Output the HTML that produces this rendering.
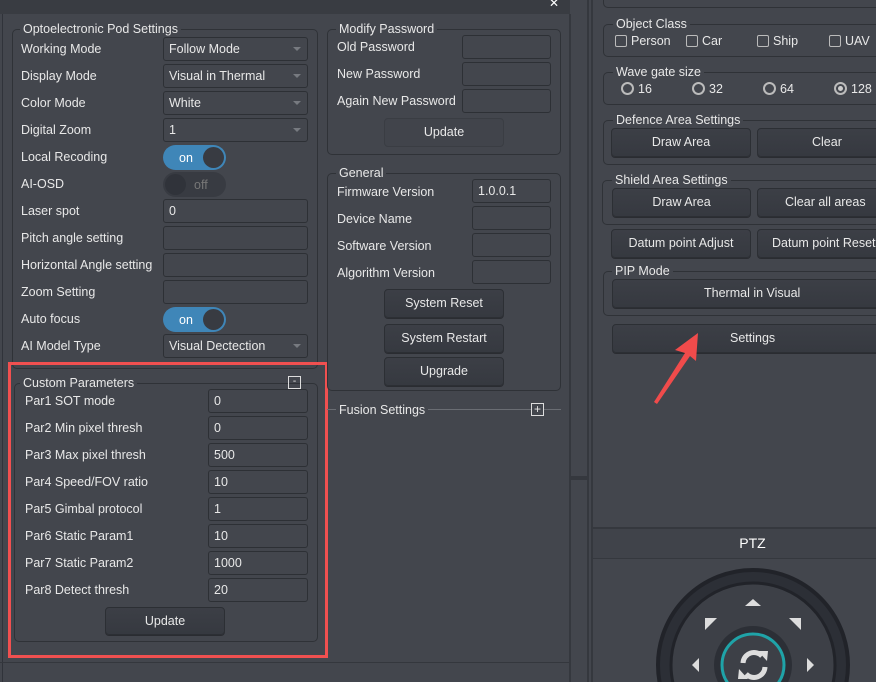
<!DOCTYPE html><html style="overflow:hidden"><head><style>
*{margin:0;padding:0;box-sizing:border-box}
html,body{width:876px;height:682px;overflow:hidden}
body{background:#43464d;position:relative;font-family:"Liberation Sans","Noto Sans CJK SC",sans-serif;font-size:12.5px;color:#e8e8e8}
.a{position:absolute}
.g{position:absolute;border:1px solid #2f3237;border-radius:5px}
.gt{position:absolute;background:#43464d;padding:0 3px;line-height:14px;white-space:nowrap}
.l{position:absolute;line-height:16px;white-space:nowrap}
.f{position:absolute;height:24px;border:1px solid #2d3035;border-radius:3px;background:#43464d;padding-left:5px;line-height:22px}
.cb:after{content:"";position:absolute;right:6px;top:9px;border:4px solid transparent;border-top:4px solid #777a80}
.b{position:absolute;border:1px solid #2c2f34;border-radius:4px;background:linear-gradient(#3c3f46,#363940);text-align:center;line-height:27px;box-shadow:0 1px 0 #2a2c31}
.tg{position:absolute;width:63px;height:25px;border-radius:13px}
.tg span{line-height:16px}
.ck{display:inline-block;width:12px;height:12px;border:1px solid #bbb;border-radius:2px;vertical-align:-2px;margin-right:4px}
.rd{display:inline-block;width:13px;height:13px;border:2px solid #bbb;border-radius:50%;vertical-align:-2px;margin-right:4px;position:relative}
</style></head><body>
<div class="a" style="left:0;top:0;width:570px;height:14px;background:#393c42"></div>
<div class="a" style="left:549px;top:-4px;font-size:12px;color:#fff">✕</div>
<div class="a" style="left:2px;top:14px;width:1px;height:668px;background:#30333a"></div>
<div class="a" style="left:569px;top:14px;width:2px;height:668px;background:#35383e"></div>
<div class="a" style="left:571px;top:0;width:17px;height:682px;background:#43464d"></div>
<div class="a" style="left:571px;top:476px;width:17px;height:4px;background:#35383e"></div>
<div class="a" style="left:587px;top:0;width:2px;height:682px;background:#35383e"></div>
<div class="a" style="left:591px;top:0;width:2px;height:682px;background:#35383e"></div>
<div class="a" style="left:0;top:662px;width:569px;height:1px;background:#34373d"></div>

<div class="g" style="left:12px;top:29px;width:306px;height:340px"></div>
<div class="gt" style="left:20px;top:22px">Optoelectronic Pod Settings</div>
<div class="l" style="left:21px;top:41px">Working Mode</div><div class="f cb" style="left:163px;top:37px;width:145px">Follow Mode</div>
<div class="l" style="left:21px;top:68px">Display Mode</div><div class="f cb" style="left:163px;top:64px;width:145px">Visual in Thermal</div>
<div class="l" style="left:21px;top:95px">Color Mode</div><div class="f cb" style="left:163px;top:91px;width:145px">White</div>
<div class="l" style="left:21px;top:122px">Digital Zoom</div><div class="f cb" style="left:163px;top:118px;width:145px">1</div>
<div class="l" style="left:21px;top:149px">Local Recoding</div>
<div class="tg" style="left:163px;top:145px;background:#3f86b8"><span class="a" style="left:16px;top:5px;color:#fff">on</span><span class="a" style="left:40px;top:2px;width:21px;height:21px;border-radius:50%;background:#383b42"></span></div>
<div class="l" style="left:21px;top:176px">AI-OSD</div>
<div class="tg" style="left:163px;top:172px;background:#383b42"><span class="a" style="left:2px;top:2px;width:21px;height:21px;border-radius:50%;background:#30333a"></span><span class="a" style="left:31px;top:5px;color:#777">off</span></div>
<div class="l" style="left:21px;top:203px">Laser spot</div><div class="f" style="left:163px;top:199px;width:145px">0</div>
<div class="l" style="left:21px;top:230px">Pitch angle setting</div><div class="f" style="left:163px;top:226px;width:145px"></div>
<div class="l" style="left:21px;top:257px">Horizontal Angle setting</div><div class="f" style="left:163px;top:253px;width:145px"></div>
<div class="l" style="left:21px;top:284px">Zoom Setting</div><div class="f" style="left:163px;top:280px;width:145px"></div>
<div class="l" style="left:21px;top:311px">Auto focus</div>
<div class="tg" style="left:163px;top:307px;background:#3f86b8"><span class="a" style="left:16px;top:5px;color:#fff">on</span><span class="a" style="left:40px;top:2px;width:21px;height:21px;border-radius:50%;background:#383b42"></span></div>
<div class="l" style="left:21px;top:338px">AI Model Type</div><div class="f cb" style="left:163px;top:334px;width:145px">Visual Dectection</div>

<div class="a" style="left:8px;top:362px;width:320px;height:296px;border:3px solid #f05050"></div>
<div class="g" style="left:14px;top:383px;width:304px;height:259px"></div>
<div class="gt" style="left:20px;top:376px">Custom Parameters</div>
<div class="a" style="left:288px;top:376px;width:13px;height:13px;border:1px solid #ddd;font-size:10px;line-height:9px;text-align:center">-</div>
<div class="l" style="left:25px;top:393px">Par1 SOT mode</div><div class="f" style="left:208px;top:389px;width:100px">0</div>
<div class="l" style="left:25px;top:420px">Par2 Min pixel thresh</div><div class="f" style="left:208px;top:416px;width:100px">0</div>
<div class="l" style="left:25px;top:447px">Par3 Max pixel thresh</div><div class="f" style="left:208px;top:443px;width:100px">500</div>
<div class="l" style="left:25px;top:474px">Par4 Speed/FOV ratio</div><div class="f" style="left:208px;top:470px;width:100px">10</div>
<div class="l" style="left:25px;top:501px">Par5 Gimbal protocol</div><div class="f" style="left:208px;top:497px;width:100px">1</div>
<div class="l" style="left:25px;top:528px">Par6 Static Param1</div><div class="f" style="left:208px;top:524px;width:100px">10</div>
<div class="l" style="left:25px;top:555px">Par7 Static Param2</div><div class="f" style="left:208px;top:551px;width:100px">1000</div>
<div class="l" style="left:25px;top:582px">Par8 Detect thresh</div><div class="f" style="left:208px;top:578px;width:100px">20</div>
<div class="b" style="left:105px;top:607px;width:120px;height:28px">Update</div>

<div class="g" style="left:327px;top:29px;width:234px;height:126px"></div>
<div class="gt" style="left:336px;top:22px">Modify Password</div>
<div class="l" style="left:337px;top:39px">Old Password</div><div class="f" style="left:462px;top:35px;width:89px"></div>
<div class="l" style="left:337px;top:66px">New Password</div><div class="f" style="left:462px;top:62px;width:89px"></div>
<div class="l" style="left:337px;top:93px">Again New Password</div><div class="f" style="left:462px;top:89px;width:89px"></div>
<div class="b" style="left:384px;top:118px;width:120px;height:29px;background:#41444b;box-shadow:none;border-color:#3a3d43">Update</div>
<div class="g" style="left:327px;top:173px;width:234px;height:218px"></div>
<div class="gt" style="left:336px;top:166px">General</div>
<div class="l" style="left:337px;top:184px">Firmware Version</div><div class="f" style="left:472px;top:179px;width:79px">1.0.0.1</div>
<div class="l" style="left:337px;top:211px">Device Name</div><div class="f" style="left:472px;top:206px;width:79px"></div>
<div class="l" style="left:337px;top:238px">Software Version</div><div class="f" style="left:472px;top:233px;width:79px"></div>
<div class="l" style="left:337px;top:265px">Algorithm Version</div><div class="f" style="left:472px;top:260px;width:79px"></div>
<div class="b" style="left:384px;top:289px;width:120px;height:29px">System Reset</div>
<div class="b" style="left:384px;top:324px;width:120px;height:29px">System Restart</div>
<div class="b" style="left:384px;top:357px;width:120px;height:29px">Upgrade</div>
<div class="a" style="left:327px;top:409px;width:234px;height:1px;background:#6a6d73"></div>
<div class="gt" style="left:336px;top:403px">Fusion Settings</div>
<div class="a" style="left:531px;top:403px;width:13px;height:13px;border:1px solid #ddd;background:#43464d;font-size:12px;line-height:10px;text-align:center">+</div>

<div class="g" style="left:603px;top:-10px;width:290px;height:18px"></div>
<div class="g" style="left:603px;top:24px;width:290px;height:33px"></div>
<div class="gt" style="left:613px;top:17px">Object Class</div>
<div class="l" style="left:615px;top:33px"><span class="ck"></span>Person</div>
<div class="l" style="left:686px;top:33px"><span class="ck"></span>Car</div>
<div class="l" style="left:757px;top:33px"><span class="ck"></span>Ship</div>
<div class="l" style="left:829px;top:33px"><span class="ck"></span>UAV</div>
<div class="g" style="left:603px;top:72px;width:290px;height:33px"></div>
<div class="gt" style="left:613px;top:65px">Wave gate size</div>
<div class="l" style="left:621px;top:81px"><span class="rd"></span>16</div>
<div class="l" style="left:692px;top:81px"><span class="rd"></span>32</div>
<div class="l" style="left:763px;top:81px"><span class="rd"></span>64</div>
<div class="l" style="left:834px;top:81px"><span class="rd"><span style="position:absolute;left:2px;top:2px;width:5px;height:5px;border-radius:50%;background:#ccc"></span></span>128</div>
<div class="g" style="left:603px;top:120px;width:290px;height:45px"></div>
<div class="gt" style="left:613px;top:113px">Defence Area Settings</div>
<div class="b" style="left:611px;top:128px;width:140px;height:29px">Draw Area</div>
<div class="b" style="left:757px;top:128px;width:140px;height:29px;text-align:left;padding-left:54px">Clear</div>
<div class="g" style="left:602px;top:180px;width:290px;height:45px"></div>
<div class="gt" style="left:612px;top:173px">Shield Area Settings</div>
<div class="b" style="left:612px;top:188px;width:139px;height:29px">Draw Area</div>
<div class="b" style="left:757px;top:188px;width:140px;height:29px;text-align:left;padding-left:27px">Clear all areas</div>
<div class="b" style="left:611px;top:229px;width:140px;height:29px">Datum point Adjust</div>
<div class="b" style="left:757px;top:229px;width:140px;height:29px;text-align:left;padding-left:14px">Datum point Reset</div>
<div class="g" style="left:603px;top:271px;width:290px;height:45px"></div>
<div class="gt" style="left:612px;top:264px">PIP Mode</div>
<div class="b" style="left:612px;top:279px;width:280px;height:29px;text-align:left;padding-left:91px">Thermal in Visual</div>
<div class="b" style="left:612px;top:324px;width:280px;height:29px;text-align:left;padding-left:117px">Settings</div>
<svg class="a" style="left:650px;top:328px" width="60" height="80"><polygon points="48,5 25,22 35,25 4,74 7,76 40,28 46,33" fill="#f04b4b"/></svg>
<div class="a" style="left:593px;top:527px;width:283px;height:2px;background:#35383e"></div>
<div class="a" style="left:593px;top:529px;width:283px;height:29px;background:#40434a;text-align:center;line-height:29px;font-size:14px;color:#fff;padding-left:36px">PTZ</div>
<div class="a" style="left:593px;top:558px;width:283px;height:1px;background:#35383e"></div>
<svg class="a" style="left:593px;top:559px" width="283" height="123">
<circle cx="160" cy="106" r="95" fill="#2c2f36" stroke="#212329" stroke-width="4"/>
<circle cx="160" cy="106" r="82" fill="#3d4047" stroke="#212329" stroke-width="3"/>
<circle cx="160" cy="106" r="39" fill="#2c2f36"/>
<circle cx="160" cy="106" r="31" fill="#3d4047" stroke="#1fa3a8" stroke-width="3"/>
<polygon points="152,47 160,40 168,47" fill="#ddd"/>
<polygon points="112,59 124,59 112,71" fill="#ddd"/>
<polygon points="208,59 196,59 208,71" fill="#ddd"/>
<polygon points="99,106 106,99 106,113" fill="#ddd"/>
<polygon points="221,106 214,99 214,113" fill="#ddd"/>
<path d="M150,104 a11,11 0 0 1 19,-7 M172,108 a11,11 0 0 1 -19,7" stroke="#ddd" stroke-width="5" fill="none"/>
<polygon points="165,92 175,92 174,102" fill="#ddd"/><polygon points="155,120 145,120 146,110" fill="#ddd"/>
</svg>
</body></html>
